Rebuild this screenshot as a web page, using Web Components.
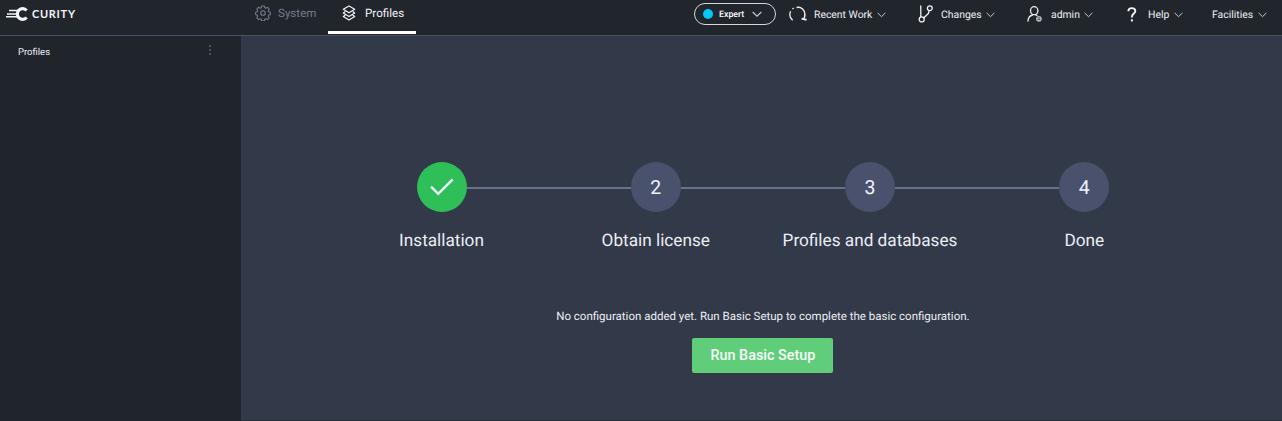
<!DOCTYPE html>
<html lang="en">
<head>
<meta charset="utf-8">
<title>Profiles</title>
<style>
html, body { margin: 0; height: 100%; overflow: hidden; background: #323948; }
body { font-family: Roboto, "Liberation Sans", sans-serif; color: #e9ebf2; text-rendering: geometricPrecision; }
</style>
</head>
<body>
<admin-app></admin-app>
<script>
const define = (name, html) => {
  const t = document.createElement('template');
  t.innerHTML = html;
  customElements.define(name, class extends HTMLElement {
    constructor() {
      super();
      this.attachShadow({ mode: 'open' }).appendChild(t.content.cloneNode(true));
    }
  });
};

const ICONS = {
  gear: [16, 16, '<g stroke-width="1.1"><circle cx="8" cy="8" r="2.3"/><path d="M6.7 1h2.6l.5 1.8 1 .4 1.7-.9 1.7 1.8-.9 1.6.4 1 1.7.5v2.4l-1.7.6-.4 1 .9 1.6-1.8 1.8-1.6-.9-1 .4-.5 1.7H6.7l-.5-1.700-1-.4-1.600.9-1.800-1.800.9-1.600-.4-1-1.700-.6V7.200l1.700-.5.4-1-.9-1.600 1.700-1.800 1.700.9 1-.4z" stroke-linejoin="round"/></g>'],
  layers: [14, 16, '<g stroke-width="1.2" stroke-linejoin="round" stroke-linecap="round"><path d="M7 .9l5.700 3.400L7 7.800 1.300 4.300z"/><path d="M3 6.700L1.300 7.900 7 11.400l5.700-3.500L11 6.700"/><path d="M3 10.300l-1.700 1.100L7 15l5.700-3.600-1.700-1.100"/></g>'],
  recent: [18, 16, '<g stroke-width="1.500"><path d="M7.600 1.500C12.300.6 16 4 15.900 8.500c0 1.700-.4 3.300-1.300 4.800"/><path d="M12.600 12.700l5 1.100" stroke-width="1.800"/><path d="M1.600 5.300C.3 8.300 1 12 3.600 14.300" stroke-width="1.300"/><path d="M3.400 3l1.300-.9" stroke-width="1.200"/></g>'],
  branch: [16, 18, '<g stroke-width="1.300" stroke-linecap="round"><circle cx="3.700" cy="14.400" r="2.500"/><circle cx="11.800" cy="3.200" r="2.400"/><path d="M2.800 1v10.800M11.200 5.600c-.2 3.200-1.500 4-3 5-1 .7-1.700 1.300-2.100 2.300"/></g>'],
  user: [16, 16, '<g stroke-width="1.300" stroke-linecap="round"><ellipse cx="7.200" cy="4.700" rx="3.700" ry="4"/><path d="M1 15c.2-3.500 2-5.400 4.600-6M8.700 8.900l1.200.5"/></g><circle cx="11.900" cy="12.800" r="2.100" stroke-width="1.600" opacity=".7"/><circle cx="11.900" cy="12.800" r=".7" fill="currentColor" stroke="none"/>'],
  help: [10, 15, '<path d="M1.300 4.200C1.400 2.200 2.700 1.100 4.800 1.100c2.200 0 3.500 1.200 3.500 3 0 2.600-3.400 2.900-3.400 5.600v.7" stroke-width="1.900"/><path d="M4.900 12.300v2.200" stroke-width="2"/>'],
  chevron: [9, 6, '<path d="M.6.900l3.900 3.800L8.400.9" stroke-width="1"/>'],
  check: [26, 20, '<path d="M2 9.700l7.200 7.100L23.700 2.400" stroke-width="2.500"/>'],
  dots: [4, 12, '<g fill="currentColor" stroke="none"><circle cx="2" cy="2" r=".8"/><circle cx="2" cy="6" r=".8"/><circle cx="2" cy="10" r=".8"/></g>']
};
customElements.define('ui-icon', class extends HTMLElement {
  constructor() { super(); this.attachShadow({ mode: 'open' }); }
  connectedCallback() {
    const [w, h, body] = ICONS[this.getAttribute('name')];
    const width = this.getAttribute('width') || w;
    this.shadowRoot.innerHTML = `<style>:host{display:block;flex:none}svg{display:block}</style>
      <svg width="${width}" height="${h * width / w}" viewBox="0 0 ${w} ${h}" fill="none" stroke="currentColor">${body}</svg>`;
  }
});

define('brand-logo', `
<style>
:host { display: flex; align-items: center; height: 28px; width: 248px; padding-left: 6px; box-sizing: border-box; flex: none; color: #f4f5f7; }
svg { flex: none; margin-right: 3px; }
span { font: 700 11px/27px Lato, sans-serif; letter-spacing: .7px; white-space: nowrap; }
</style>
<svg width="23" height="16" viewBox="0 0 23 16" fill="none" stroke="currentColor">
<path d="M20.600 4.500A5.300 5.300 0 1 0 20.600 11.500" stroke-width="3.200"/>
<path d="M3 4.500h10M1 7.900h10.500M0 10.700h12" stroke-width="1.500"/>
</svg><span>CURITY</span>`);

define('nav-tab', `
<style>
:host { display: flex; width: 88px; height: 34px; box-sizing: border-box; padding-bottom: 6px; align-items: center; border-bottom: 3px solid transparent; color: #747a88; font-size: 11.600px; flex: none; }
:host([active]) { color: #f2f3f6; border-color: #fff; }
.icon { width: 37px; box-sizing: border-box; padding-left: 14px; }
</style>
<div class="icon"><slot name="icon"></slot></div><slot></slot>`);

define('menu-item', `
<style>
:host { display: flex; align-items: center; height: 28px; box-sizing: border-box; font-size: 10.400px; white-space: nowrap; flex: none; color: #f0f1f4; }
.icon { flex: none; width: var(--icon-box, 0px); }
.label { flex: 1; }
ui-icon.c { color: #c9ccd4; margin-top: 1px; }
</style>
<div class="icon"><slot name="icon"></slot></div><div class="label"><slot></slot></div><ui-icon class="c" name="chevron"></ui-icon>`);

define('mode-pill', `
<style>
:host { display: flex; align-items: center; width: 82px; height: 22px; box-sizing: border-box; border: 1px solid #d5d7dc; border-radius: 11px; padding: 0 13px 0 8px; font-size: 8.800px; font-weight: 500; color: #fff; flex: none; margin-top: 3px; }
i { width: 10px; height: 10px; border-radius: 50%; background: #00c8f8; margin-right: 6px; }
span { flex: 1; padding-top: 1px; }
ui-icon { color: #c9ccd4; }
</style>
<i></i><span><slot></slot></span><ui-icon name="chevron" width="10"></ui-icon>`);

define('top-bar', `
<style>
:host { display: flex; align-items: flex-start; height: 36px; box-sizing: border-box; background: #21262d; border-bottom: 1px solid #4a5068; }
.menu { display: flex; align-items: flex-start; margin-left: auto; padding-right: 15px; }
</style>
<brand-logo></brand-logo>
<nav-tab style="margin-left:-7px"><ui-icon slot="icon" name="gear"></ui-icon>System</nav-tab>
<nav-tab active style="margin-left:-1px"><ui-icon slot="icon" name="layers"></ui-icon>Profiles</nav-tab>
<div class="menu">
<mode-pill>Expert</mode-pill>
<menu-item style="width:97px;margin-left:13px;--icon-box:25px"><ui-icon slot="icon" name="recent"></ui-icon>Recent Work</menu-item>
<menu-item style="width:77px;margin-left:32px;--icon-box:23px"><ui-icon slot="icon" name="branch"></ui-icon>Changes</menu-item>
<menu-item style="width:66px;margin-left:32px;--icon-box:24px"><ui-icon slot="icon" name="user"></ui-icon>admin</menu-item>
<menu-item style="width:56px;margin-left:34px;--icon-box:21px"><ui-icon slot="icon" name="help"></ui-icon>Help</menu-item>
<menu-item style="width:55px;margin-left:29px">Facilities</menu-item>
</div>`);

define('side-bar', `
<style>
:host { display: block; width: 241px; background: #20252c; flex: none; }
header { display: flex; justify-content: space-between; align-items: center; height: 30px; padding: 0 29px 0 18px; font-size: 9.500px; color: #f0f1f4; }
span { padding-top: 2px; }
ui-icon { color: #858a97; margin-top: -2px; }
</style>
<header><span>Profiles</span><ui-icon name="dots"></ui-icon></header>`);

define('setup-step', `
<style>
:host { display: block; text-align: center; }
.track { display: flex; align-items: center; height: 50px; }
.track::before, .track::after { content: ""; flex: 1; height: 2px; margin-top: 2px; background: #69708e; }
:host([first]) .track::before, :host([last]) .track::after { background: none; }
.dot { display: flex; align-items: center; justify-content: center; width: 50px; height: 50px; border-radius: 50%; background: #4a516d; color: #f0f2fa; font-size: 19.500px; }
:host([complete]) .dot { background: #2fbf58; }
.label { margin-top: 19px; font-size: 17.200px; line-height: 20px; white-space: nowrap; color: #eceef5; }
</style>
<div class="track"><div class="dot"><slot name="mark"></slot></div></div><div class="label"><slot></slot></div>`);

define('setup-wizard', `
<style>
:host { display: flex; flex-direction: column; align-items: center; flex: 1; background: #323948; padding: 126px 0 0 2.800px; box-sizing: border-box; border-bottom: 1px solid #272c37; }
.steps { display: grid; grid-template-columns: repeat(4, 214.250px); }
p { margin: 57px 0 0; font-size: 11.500px; line-height: 16px; color: #eceef5; white-space: nowrap; }
button { margin: 14px 0 0; width: 141px; height: 35px; padding: 1px 0 0; border: 0; border-radius: 2px; background: #60cd7b; color: #f8fff9; font: 500 14.400px/34px Roboto, sans-serif; white-space: nowrap; }
</style>
<div class="steps">
<setup-step first complete><ui-icon slot="mark" name="check"></ui-icon>Installation</setup-step>
<setup-step><span slot="mark">2</span>Obtain license</setup-step>
<setup-step><span slot="mark">3</span>Profiles and databases</setup-step>
<setup-step last><span slot="mark">4</span>Done</setup-step>
</div>
<p>No configuration added yet. Run Basic Setup to complete the basic configuration.</p>
<button>Run Basic Setup</button>`);

define('admin-app', `
<style>
:host { display: flex; flex-direction: column; height: 100vh; }
main { display: flex; flex: 1; }
</style>
<top-bar></top-bar><main><side-bar></side-bar><setup-wizard></setup-wizard></main>`);
</script>
</body>
</html>
